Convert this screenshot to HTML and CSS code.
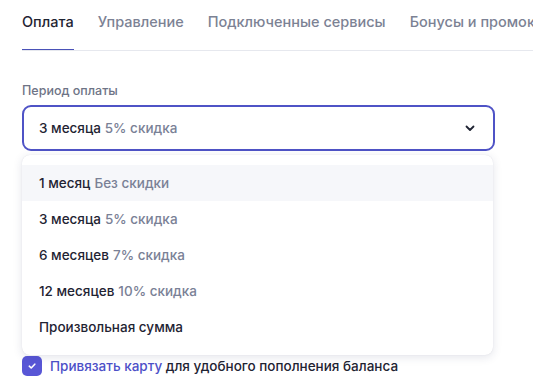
FILE: index.html
```html
<!DOCTYPE html>
<html lang="ru">
<head>
<meta charset="utf-8">
<link rel="stylesheet" href="styles.css">
</head>
<body>
<div class="page">
  <nav class="tabs">
    <div class="tab active">Оплата</div>
    <div class="tab">Управление</div>
    <div class="tab">Подключенные сервисы</div>
    <div class="tab">Бонусы и промокоды</div>
  </nav>
  <div class="field">
    <div class="label">Период оплаты</div>
    <div class="select-wrap">
      <div class="select">
        <span><span class="main">3 месяца</span> <span class="sub">5% скидка</span></span>
        <svg class="chev" width="14" height="14" viewBox="0 0 14 14"><path d="M3.5 5.5 L7 9 L10.5 5.5" fill="none" stroke="#1f2433" stroke-width="1.8" stroke-linecap="round" stroke-linejoin="round"/></svg>
      </div>
      <div class="menu">
        <div class="opt hover"><span class="main">1 месяц</span> <span class="sub">Без скидки</span></div>
        <div class="opt"><span class="main">3 месяца</span> <span class="sub">5% скидка</span></div>
        <div class="opt"><span class="main">6 месяцев</span> <span class="sub">7% скидка</span></div>
        <div class="opt"><span class="main">12 месяцев</span> <span class="sub">10% скидка</span></div>
        <div class="opt"><span class="main">Произвольная сумма</span></div>
      </div>
    </div>
  </div>
  <label class="check">
    <span class="box"><svg width="10" height="10" viewBox="0 0 10 10"><path d="M2.3 5.2 L4.2 7 L7.8 3.2" fill="none" stroke="#fff" stroke-width="1.6" stroke-linecap="round" stroke-linejoin="round"/></svg></span>
    <span class="check-text"><span class="link">Привязать карту</span> для удобного пополнения баланса</span>
  </label>
</div>
</body>
</html>
```
FILE: styles.css
```css
html, body {
  margin: 0;
  padding: 0;
  background: #fff;
  overflow: hidden;
}
body {
  font-family: Inter, "Noto Sans", sans-serif;
  color: #1f2433;
  width: 533px;
  height: 380px;
}
.page {
  padding-left: 22px;
}
.tabs {
  display: flex;
  gap: 24px;
  border-bottom: 1px solid #e6e8ee;
  white-space: nowrap;
  overflow: hidden;
}
.tab {
  font-size: 14.5px;
  line-height: 20px;
  font-weight: 500;
  color: #7c8294;
  padding: 12px 0 18px;
}
.tab.active {
  color: #1f2433;
  border-bottom: 2px solid #4a52b8;
  padding-bottom: 17px;
  margin-bottom: -1px;
}
.field {
  margin-top: 32px;
  width: 473px;
}
.label {
  font-size: 12.5px;
  line-height: 16px;
  color: #6e7486;
  font-weight: 500;
  margin-bottom: 6px;
}
.select-wrap {
  position: relative;
}
.select {
  height: 42px;
  border: 2px solid #4f53c6;
  border-radius: 9px;
  display: flex;
  align-items: center;
  justify-content: space-between;
  padding: 0 16px 0 15px;
  font-size: 13.5px;
}
.main {
  color: #1f2433;
  font-weight: 500;
}
.sub {
  color: #7a8196;
  font-weight: 500;
}
.chev {
  display: block;
}
.menu {
  position: absolute;
  left: 0;
  top: 50px;
  width: 471px;
  background: #fff;
  border-radius: 8px;
  box-shadow: 0 2px 10px rgba(40, 48, 90, 0.13), 0 0 1px rgba(40, 48, 90, 0.15);
  padding: 10px 0;
  z-index: 5;
}
.opt {
  height: 36px;
  display: flex;
  align-items: center;
  padding-left: 17px;
  font-size: 13.5px;
  gap: 4px;
}
.opt.hover {
  background: #f6f7fa;
}
.check {
  display: flex;
  align-items: center;
  gap: 8px;
  margin-top: 205px;
  font-size: 13.5px;
  font-weight: 500;
}
.box {
  width: 20px;
  height: 20px;
  border-radius: 5px;
  background: #5856d6;
  display: flex;
  align-items: center;
  justify-content: center;
}
.box svg { display: block; }
.link {
  color: #4d50c8;
}
```
